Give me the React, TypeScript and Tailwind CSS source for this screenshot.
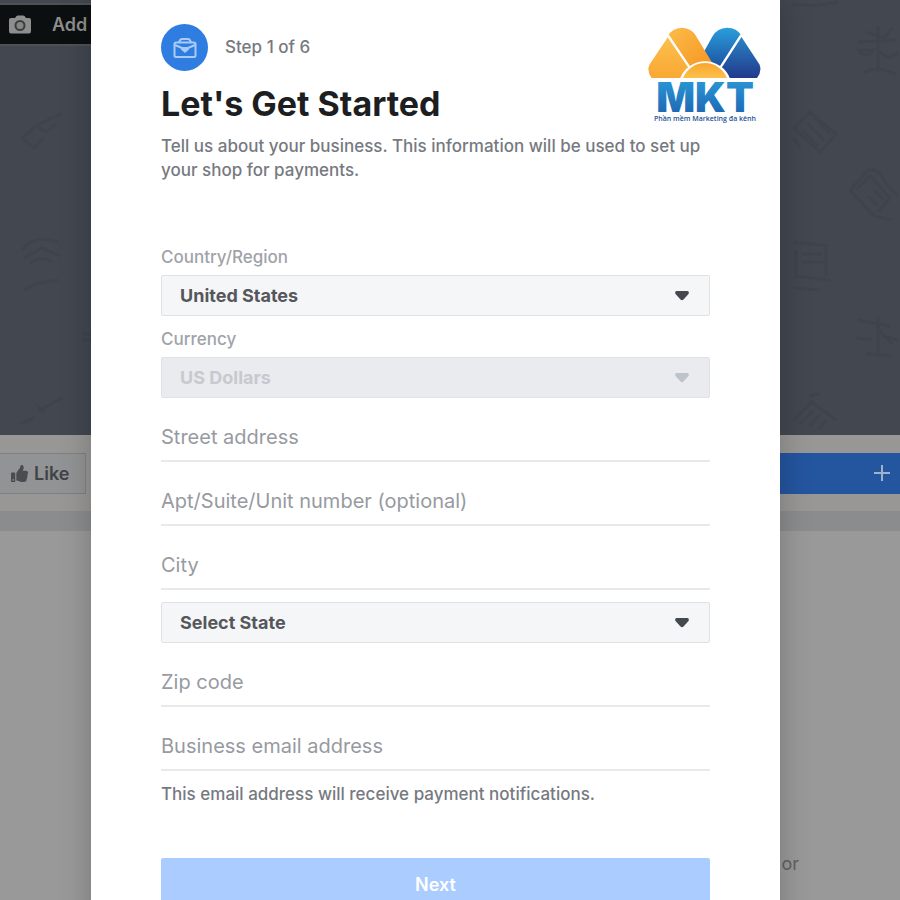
import { FaThumbsUp } from "react-icons/fa";

function Logo() {
  return (
    <svg viewBox="0 0 345 300" className="absolute top-[27px] right-[18px] w-[115px] h-[100px]" role="img" aria-label="MKT">
      <defs>
        <linearGradient id="orange" x1="0" y1="0" x2="1" y2="1">
          <stop offset="0" stopColor="#fcbc4a" />
          <stop offset="1" stopColor="#f5921e" />
        </linearGradient>
        <linearGradient id="sun" x1="0" y1="0" x2="0" y2="1">
          <stop offset="0" stopColor="#f9a62f" />
          <stop offset="1" stopColor="#fcc04a" />
        </linearGradient>
        <linearGradient id="gold" x1="0" y1="0" x2="0" y2="1">
          <stop offset="0" stopColor="#fdc04e" />
          <stop offset="1" stopColor="#f9a833" />
        </linearGradient>
        <linearGradient id="sky" x1="0" y1="0" x2="0" y2="1">
          <stop offset="0" stopColor="#2a9edb" />
          <stop offset="1" stopColor="#1d4f9f" />
        </linearGradient>
        <linearGradient id="navy" x1="0" y1="0" x2="0" y2="1">
          <stop offset="0" stopColor="#2a86c8" />
          <stop offset="1" stopColor="#213a8c" />
        </linearGradient>
        <linearGradient id="word" x1="0" y1="0" x2="0" y2="1">
          <stop offset="0" stopColor="#2ba0dc" />
          <stop offset="1" stopColor="#1c5cab" />
        </linearGradient>
      </defs>
      <path d="M165 85L197 27Q211 3 240 2Q270 3 283 25L222 122L190 125Z" fill="url(#sky)" />
      <path d="M280 25L337 112Q346 132 330 153H245L222 118Z" fill="url(#navy)" />
      <path d="M62 27Q76 3 104 2Q134 3 147 27L202 118L170 135L126 119Z" fill="url(#orange)" />
      <path d="M65 27L8 112Q-2 132 14 153H105L128 119Z" fill="url(#gold)" />
      <path d="M62 24L130 125M283 24L218 125" stroke="#fff" strokeWidth="7" />
      <path d="M99 155A80 80 0 0 1 249 155Z" fill="#fff" />
      <path d="M108 153A71 71 0 0 1 240 153Z" fill="url(#sun)" />
      <text x="174" y="256" textAnchor="middle" fontFamily="Inter, sans-serif" fontWeight="900" fontSize="122" fill="url(#word)">MKT</text>
      <text x="174" y="283" textAnchor="middle" fontFamily="'Open Sans', sans-serif" fontWeight="600" fontSize="21" fill="#24509b">Phần mềm Marketing đa kênh</text>
    </svg>
  );
}

function BriefcaseIcon() {
  return (
    <svg viewBox="0 0 24 22" className="w-6 h-[22px]" fill="none" stroke="#a9cbf8" strokeWidth="2" strokeLinejoin="round">
      <path d="M6 5.500Q7 2 9 2H15Q17 2 18 5.500" />
      <rect x="1.500" y="5.500" width="21" height="14.500" rx="1.500" />
      <path d="M2 8L9 11M22 8L15 11" />
      <path d="M8 10H16V12.500L12 16L8 12.500Z" fill="#a9cbf8" stroke="none" />
    </svg>
  );
}

function CameraIcon() {
  return (
    <svg viewBox="0 0 22 19" className="w-[22px] h-[19px] shrink-0">
      <path d="M2 3H6L7.500 1Q8 .5 9 .5H14Q15 .5 15.500 1L17 3H20Q22 3 22 5V16Q22 18.500 20 18.500H2Q0 18.500 0 16V5Q0 3 2 3Z" fill="#8d8e8e" />
      <circle cx="11" cy="10.500" r="4.500" fill="#858686" stroke="#3b3d3d" strokeWidth="2" />
    </svg>
  );
}

// faint doodles printed on the cover photo
function Doodles({ side }: { side: "left" | "right" }) {
  return (
    <svg
      viewBox="0 0 120 435"
      className={side === "left" ? "w-[120px] h-[435px]" : "w-[120px] h-[435px] ml-auto"}
      fill="none"
      stroke="#383d47"
      strokeWidth="3"
      opacity=".3"
    >
      {side === "left" ? (
        <path d="M22 138L36 126L62 113M22 138L34 148L44 138M36 126L46 132L56 124M22 250Q34 234 58 242M24 258L42 248L60 256M30 264Q40 254 52 262M24 290L36 284L58 280M82 334H100M82 340H96M38 411L62 398M20 424L34 418M36 404L44 412" />
      ) : (
        <>
          <path d="M12 4L34 6L58 2M78 42L116 40M98 26V72M86 32L104 38L112 28M78 50Q86 60 94 50ZM100 52Q110 62 118 52M84 72L98 68L116 74" />
          <path d="M14 128L30 112L56 134L40 152ZM22 130L38 146M28 124L44 140M34 118L50 134M14 138L20 148" />
          <path d="M70 190L88 170Q100 168 106 184L118 196M70 190L94 216L112 220M76 190L90 176L110 198L98 212M88 196L98 206M94 190L104 200" />
          <path d="M14 242L48 246M16 250V274M22 254H42M22 262H44M14 276L50 280M14 288L40 290M46 246V276" />
          <path d="M78 320L110 326M98 316V354M76 338L92 340M102 336L118 340M86 354L112 356M96 326L112 344" />
          <path d="M14 420L32 402L56 420M20 424L34 410M30 426L40 414M38 430L46 420M30 396L40 394" />
        </>
      )}
    </svg>
  );
}

function Backdrop() {
  return (
    <div className="flex flex-col h-screen overflow-hidden bg-[#999999]" aria-hidden="true">
      <div className="relative h-[435px] shrink-0 flex bg-[#424750]">
        <Doodles side="left" />
        <Doodles side="right" />
        <div className="absolute top-[3px] left-0 w-[200px] h-[43px] pl-[9px] flex items-center gap-[21px] bg-[#0c0f10] border-y-2 border-[#4e5256] text-[#8d8e8e] text-[18px] font-semibold">
          <CameraIcon />
          <span>Add</span>
        </div>
      </div>
      <div className="h-[76px] shrink-0 flex items-center justify-between bg-[#989796]">
        <button tabIndex={-1} className="flex items-center gap-[6px] h-[41px] w-[86px] pl-[11px] bg-[#929394] border border-l-0 border-[#7f8081] text-[#404347] text-[18px] font-semibold">
          <FaThumbsUp size={17} className="text-[#4a4d50]" />
          Like
        </button>
        <button tabIndex={-1} className="flex items-center justify-end h-[41px] w-[200px] pr-[10px] bg-[#24559f]">
          <svg viewBox="0 0 16 16" className="w-4 h-4" stroke="#9fb1cc" strokeWidth="2">
            <path d="M8 0V16M0 8H16" />
          </svg>
        </button>
      </div>
      <div className="h-5 shrink-0 bg-[#8b8c8e]" />
      <p className="mt-auto mb-[24px] pr-[101px] text-right text-[18px] leading-6 text-[#606162]">or</p>
    </div>
  );
}

function Select({ id, value, disabled }: { id: string; value: string; disabled?: boolean }) {
  return (
    <div className="relative">
      <select
        id={id}
        aria-label={id === "state" ? "State" : undefined}
        disabled={disabled}
        className="block appearance-none w-full h-[41px] pl-[18px] rounded-[2px] border border-[#dfe1e4] bg-[#f5f6f7] text-[#55575c] text-[18px] font-bold opacity-100 disabled:bg-[#e9ebee] disabled:text-[#c6c9cf]"
      >
        <option>{value}</option>
      </select>
      <svg viewBox="0 0 14 10" className={disabled ? "absolute right-[21px] top-4 w-[14px] h-[10px] fill-[#bec2c9]" : "absolute right-[21px] top-4 w-[14px] h-[10px] fill-[#444950]"}>
        <path d="M1.500 0H12.500Q14.500 .5 13.500 3L8.500 8.500Q7 10 5.500 8.500L.5 3Q-.5 .5 1.500 0Z" />
      </svg>
    </div>
  );
}

function Field({ label, type = "text" }: { label: string; type?: string }) {
  return (
    <input
      type={type}
      aria-label={label}
      placeholder={label}
      className="block w-full h-12 mt-4 border-b-2 border-[#e8e9eb] text-[20px] text-[#1c1e21] placeholder:text-[#979aa1] placeholder:opacity-100 outline-none"
    />
  );
}

export default function App() {
  return (
    <div className="grid h-screen overflow-hidden font-[Inter,sans-serif]">
      <div className="col-start-1 row-start-1">
        <Backdrop />
      </div>
      <div className="col-start-1 row-start-1 z-10 h-screen overflow-y-auto [scrollbar-width:none] pl-[91px] pr-[120px]">
        <main role="dialog" aria-labelledby="title" className="relative min-h-screen px-[70px] pt-6 pb-10 bg-white shadow-[0_0_30px_rgba(0,0,0,0.22)]">
          <Logo />
          <div className="flex items-center gap-[17px] text-[17px] font-medium text-[#76797f]">
            <span className="flex items-center justify-center w-[47px] h-[47px] rounded-full bg-[#2f7de1]">
              <BriefcaseIcon />
            </span>
            Step 1 of 6
          </div>
          <h1 id="title" className="mt-[13px] text-[34px] leading-10 font-bold text-[#1c1e21]">Let's Get Started</h1>
          <p className="mt-[10px] text-[17px] leading-6 font-medium text-[#76797f]">
            Tell us about your business. This information will be used to set up your shop for payments.
          </p>

          <form className="mt-[63px]">
            <label htmlFor="country" className="block mb-[6px] text-[17px] leading-6 font-medium text-[#a0a3a9]">Country/Region</label>
            <Select id="country" value="United States" />
            <label htmlFor="currency" className="block mt-[11px] mb-[6px] text-[17px] leading-6 font-medium text-[#a0a3a9]">Currency</label>
            <Select id="currency" value="US Dollars" disabled />
            <Field label="Street address" />
            <Field label="Apt/Suite/Unit number (optional)" />
            <Field label="City" />
            <div className="mt-3">
              <Select id="state" value="Select State" />
            </div>
            <Field label="Zip code" />
            <Field label="Business email address" type="email" />
            <p className="mt-[11px] text-[17px] leading-6 font-medium text-[#76797f]">This email address will receive payment notifications.</p>
            <button type="button" className="mt-[52px] w-full h-[53px] rounded-[2px] bg-[#aaccff] text-white text-[18px] font-semibold">Next</button>
          </form>
        </main>
      </div>
    </div>
  );
}
